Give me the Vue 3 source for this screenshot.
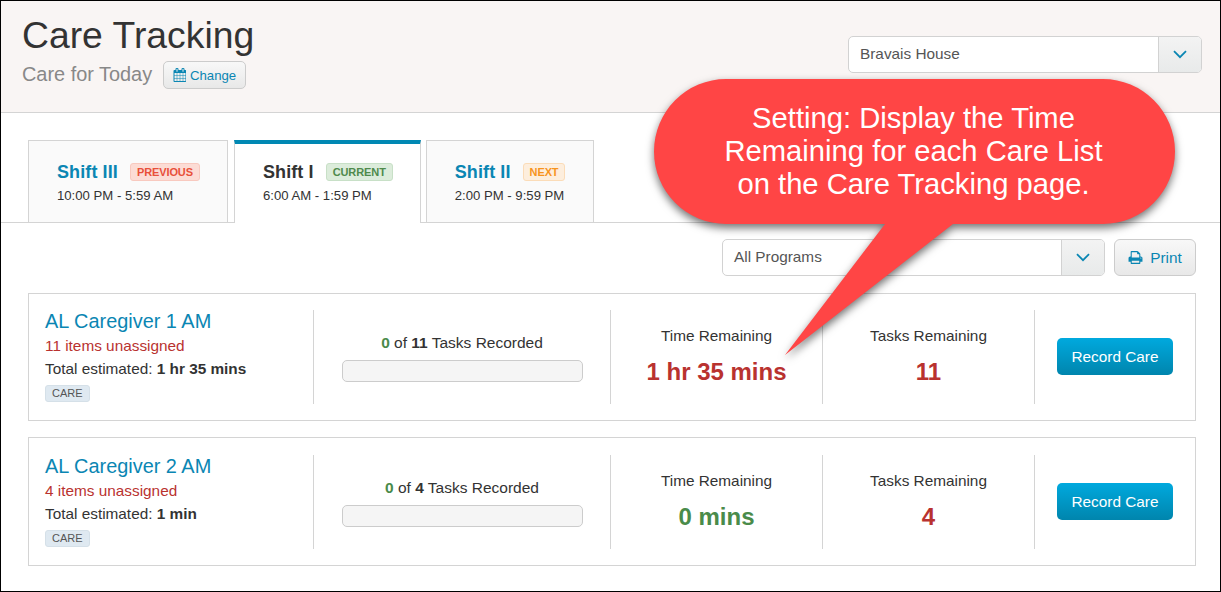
<script setup>
const tabs = [
  { name: 'Shift III', badge: 'Previous', kind: 'previous', time: '10:00 PM - 5:59 AM' },
  { name: 'Shift I', badge: 'Current', kind: 'current', time: '6:00 AM - 1:59 PM' },
  { name: 'Shift II', badge: 'Next', kind: 'next', time: '2:00 PM - 9:59 PM' }
]
const lists = [
  { title: 'AL Caregiver 1 AM', items: 11, est: '1 hr 35 mins', time: '1 hr 35 mins', timeGood: false },
  { title: 'AL Caregiver 2 AM', items: 4, est: '1 min', time: '0 mins', timeGood: true }
]
const printPath = 'M448 1536h896v-256h-896v256zm0-640h896v-384h-160q-40 0-68-28t-28-68v-160h-640v640zm1152 64q0-26-19-45t-45-19-45 19-19 45 19 45 45 19 45-19 19-45zm128 0v416q0 13-9.5 22.5t-22.5 9.5h-224v160q0 40-28 68t-68 28h-960q-40 0-68-28t-28-68v-160h-224q-13 0-22.5-9.5t-9.5-22.5v-416q0-79 56.5-135.5t135.5-56.5h64v-544q0-40 28-68t68-28h672q40 0 88 20t76 48l152 152q28 28 48 76t20 88v256h64q79 0 135.5 56.5t56.5 135.5z'
const calPath = 'M192 1664h288v-288h-288v288zm352 0h320v-288h-320v288zm-352-352h288v-320h-288v320zm352 0h320v-320h-320v320zm-352-384h288v-288h-288v288zm736 736h320v-288h-320v288zm-384-736h320v-288h-320v288zm768 736h288v-288h-288v288zm-384-352h320v-320h-320v320zm-352-864v-288q0-13-9.5-22.5t-22.5-9.5h-64q-13 0-22.5 9.5t-9.5 22.5v288q0 13 9.5 22.5t22.5 9.5h64q13 0 22.5-9.5t9.5-22.5zm736 864h288v-320h-288v320zm-384-384h320v-288h-320v288zm384 0h288v-288h-288v288zm32-480v-288q0-13-9.5-22.5t-22.5-9.5h-64q-13 0-22.5 9.5t-9.5 22.5v288q0 13 9.5 22.5t22.5 9.5h64q13 0 22.5-9.5t9.5-22.5zm384-64v1280q0 52-38 90t-90 38h-1408q-52 0-90-38t-38-90v-1280q0-52 38-90t90-38h128v-96q0-66 47-113t113-47h64q66 0 113 47t47 113v96h384v-96q0-66 47-113t113-47h64q66 0 113 47t47 113v96h128q52 0 90 38t38 90z'
</script>

<template>
  <div class="page">
    <header class="head">
      <div class="head-left">
        <h1 class="title">Care Tracking</h1>
        <div class="sub">
          <span class="sub-text">Care for Today</span>
          <button class="btn change">
            <svg class="cal" viewBox="0 0 1664 1792"><path :d="calPath" fill="currentColor" /></svg>
            Change
          </button>
        </div>
      </div>
      <div class="select house">
        <span class="select-label">Bravais House</span>
        <span class="select-caret">
          <svg width="14" height="9" viewBox="0 0 14 9"><path d="M1 1.2 7 7.2 13 1.2" fill="none" stroke="currentColor" stroke-width="1.8" /></svg>
        </span>
      </div>
    </header>

    <nav class="tabs">
      <div v-for="t in tabs" :key="t.name" class="tab" :class="{ active: t.kind === 'current' }">
        <div class="tab-top">
          <span class="tab-name">{{ t.name }}</span>
          <span class="badge" :class="t.kind">{{ t.badge }}</span>
        </div>
        <div class="tab-time">{{ t.time }}</div>
      </div>
    </nav>

    <div class="toolbar">
      <div class="select programs">
        <span class="select-label">All Programs</span>
        <span class="select-caret">
          <svg width="14" height="9" viewBox="0 0 14 9"><path d="M1 1.2 7 7.2 13 1.2" fill="none" stroke="currentColor" stroke-width="1.8" /></svg>
        </span>
      </div>
      <button class="btn print">
        <svg class="printer" viewBox="0 0 1792 1792"><path :d="printPath" fill="currentColor" /></svg>
        Print
      </button>
    </div>

    <section class="lists">
      <article v-for="l in lists" :key="l.title" class="card">
        <div class="cell info">
          <a class="card-title">{{ l.title }}</a>
          <div class="unassigned">{{ l.items }} items unassigned</div>
          <div class="estimate">Total estimated: <b>{{ l.est }}</b></div>
          <div><span class="tag">CARE</span></div>
        </div>
        <div class="cell progress">
          <div class="recorded"><b class="good">0</b> of <b>{{ l.items }}</b> Tasks Recorded</div>
          <div class="bar"></div>
        </div>
        <div class="cell stat">
          <div class="stat-label">Time Remaining</div>
          <div class="stat-value" :class="{ good: l.timeGood }">{{ l.time }}</div>
        </div>
        <div class="cell stat">
          <div class="stat-label">Tasks Remaining</div>
          <div class="stat-value">{{ l.items }}</div>
        </div>
        <div class="cell action">
          <button class="record">Record Care</button>
        </div>
      </article>
    </section>

    <aside class="callout">
      <svg class="callout-shape" viewBox="650 75 540 295" width="540" height="295">
        <path d="M726 79H1103A72 72.5 0 0 1 1103 224H953L785 355 885 224H726A72 72.5 0 0 1 726 79Z" fill="#ff4545" />
      </svg>
      <p class="callout-text">Setting: Display the Time<br />Remaining for each Care List<br />on the Care Tracking page.</p>
    </aside>
  </div>
</template>

<style scoped>
.page {
  position: relative;
  box-sizing: border-box;
  width: 1221px;
  height: 592px;
  border: 1px solid #000;
  overflow: hidden;
  background: #fff;
  color: #333;
  font-family: "Liberation Sans", Arial, sans-serif;
  font-size: 15.35px;
}
.head {
  box-sizing: border-box;
  height: 112px;
  display: flex;
  justify-content: space-between;
  padding: 15px 18px 0 21px;
  background: #f9f5f4;
  border-bottom: 1px solid #d4d4d4;
}
.title {
  margin: 0;
  font-size: 37.3px;
  line-height: 38px;
  font-weight: 400;
  color: #333;
}
.sub {
  display: flex;
  align-items: center;
  gap: 11px;
  margin-top: 5px;
}
.sub-text {
  font-size: 19.9px;
  color: #888;
}
.btn {
  display: inline-flex;
  align-items: center;
  justify-content: center;
  box-sizing: border-box;
  border: 1px solid #ccc;
  border-radius: 5px;
  background: linear-gradient(#f8f8f8, #e8e8e8);
  color: #0a86b3;
  font-family: inherit;
  padding: 0;
}
.change {
  width: 83px;
  height: 28px;
  margin-top: 2px;
  font-size: 13.2px;
  gap: 4px;
}
.cal {
  width: 13px;
  height: 14px;
}
.select {
  display: flex;
  box-sizing: border-box;
  border: 1px solid #d2d2d2;
  border-radius: 5px;
  background: #fff;
  color: #555;
  overflow: hidden;
}
.select-label {
  flex: 1;
  padding-left: 11px;
  line-height: 33px;
}
.select-caret {
  width: 42px;
  display: flex;
  align-items: center;
  justify-content: center;
  background: linear-gradient(#f3f3f3, #e8eaea);
  border-left: 1px solid #d2d2d2;
  color: #0a86b3;
}
.house {
  width: 354px;
  height: 37px;
  margin-top: 20px;
}
.tabs {
  box-sizing: border-box;
  height: 83px;
  margin-top: 27px;
  padding-left: 27px;
  display: flex;
  gap: 6px;
  border-bottom: 1px solid #d4d4d4;
}
.tab {
  box-sizing: border-box;
  height: 83px;
  padding: 21px 27px 0 28px;
  border: 1px solid #d4d4d4;
  background: #fafafa;
}
.tab:last-child {
  margin-left: -1px;
  padding-right: 28px;
}
.tab.active {
  background: #fff;
  border-top: 4px solid #0088b3;
  border-bottom: 0;
  padding-top: 18px;
}
.tab-top {
  display: flex;
  align-items: center;
  gap: 12px;
  height: 20px;
}
.tab-name {
  font-size: 18px;
  font-weight: 700;
  letter-spacing: 0.1px;
  color: #0a86b3;
}
.active .tab-name {
  color: #333;
}
.tab-time {
  margin-top: 5px;
  font-size: 13.15px;
  line-height: 18px;
}
.badge {
  box-sizing: border-box;
  height: 18px;
  padding: 0 6px;
  border: 1px solid;
  border-radius: 3px;
  font-size: 11px;
  line-height: 16px;
  font-weight: 700;
  letter-spacing: -0.1px;
  text-transform: uppercase;
}
.previous {
  background: #fcdcd5;
  border-color: #f8c9bf;
  color: #e8503a;
}
.current {
  background: #dcecdb;
  border-color: #c8e0c7;
  color: #4f8a4c;
}
.next {
  background: #fdeedd;
  border-color: #fbdcb8;
  color: #f7941d;
}
.toolbar {
  display: flex;
  justify-content: flex-end;
  gap: 9px;
  margin-top: 16px;
  padding-right: 24px;
}
.programs {
  width: 383px;
  height: 37px;
}
.print {
  width: 82px;
  height: 37px;
  border-radius: 6px;
  font-size: 15.35px;
  gap: 7px;
}
.printer {
  width: 15px;
  height: 15px;
}
.lists {
  display: flex;
  flex-direction: column;
  gap: 16px;
  margin: 17px 24px 0 27px;
}
.card {
  box-sizing: border-box;
  height: 128px;
  padding: 16px 0;
  display: grid;
  grid-template-columns: 284px 297px 212px 212px 1fr;
  border: 1px solid #d4d4d4;
}
.card:last-child {
  height: 129px;
  padding-top: 17px;
}
.cell {
  display: flex;
  flex-direction: column;
  justify-content: center;
  align-items: center;
  box-sizing: border-box;
  border-left: 1px solid #d4d4d4;
}
.info {
  border-left: 0;
  align-items: flex-start;
  justify-content: flex-start;
  padding-left: 16px;
}
.card-title {
  font-size: 19.9px;
  line-height: 23px;
  color: #0a86b3;
}
.unassigned {
  margin-top: 2px;
  line-height: 22px;
  color: #b9322f;
}
.estimate {
  margin-top: 1px;
  line-height: 22px;
}
.tag {
  display: inline-block;
  box-sizing: border-box;
  height: 17px;
  margin-top: 5px;
  padding: 0 6px;
  border: 1px solid #d5e0e8;
  border-radius: 3px;
  background: #dfe9f1;
  color: #555;
  font-size: 11px;
  line-height: 15px;
}
.recorded {
  font-size: 15.5px;
  line-height: 22px;
}
.good {
  color: #4a8b4a;
}
.bar {
  box-sizing: border-box;
  width: 241px;
  height: 22px;
  margin-top: 6px;
  border: 1px solid #ccc;
  border-radius: 5px;
  background: #f5f5f5;
}
.stat {
  padding-bottom: 2px;
}
.stat-label {
  line-height: 20px;
}
.stat-value {
  margin-top: 11px;
  font-size: 24px;
  line-height: 30px;
  font-weight: 700;
  color: #b9322f;
}
.stat-value.good {
  color: #4a8b4a;
}
.action {
  padding-bottom: 2px;
}
.record {
  width: 116px;
  height: 37px;
  border: 0;
  border-radius: 5px;
  padding: 2px 0 0;
  background: linear-gradient(#00a9de, #0085ad);
  color: #fff;
  font-family: inherit;
  font-size: 15.35px;
}
.callout {
  position: absolute;
  left: 649px;
  top: 74px;
  width: 540px;
  height: 295px;
}
.callout-shape {
  position: absolute;
  inset: 0;
  overflow: visible;
  filter: drop-shadow(0 4px 4px rgba(0, 0, 0, 0.55));
}
.callout-text {
  position: relative;
  margin: 0;
  width: 527px;
  padding-top: 27px;
  text-align: center;
  color: #fff;
  font-size: 29.2px;
  line-height: 33px;
}
</style>
